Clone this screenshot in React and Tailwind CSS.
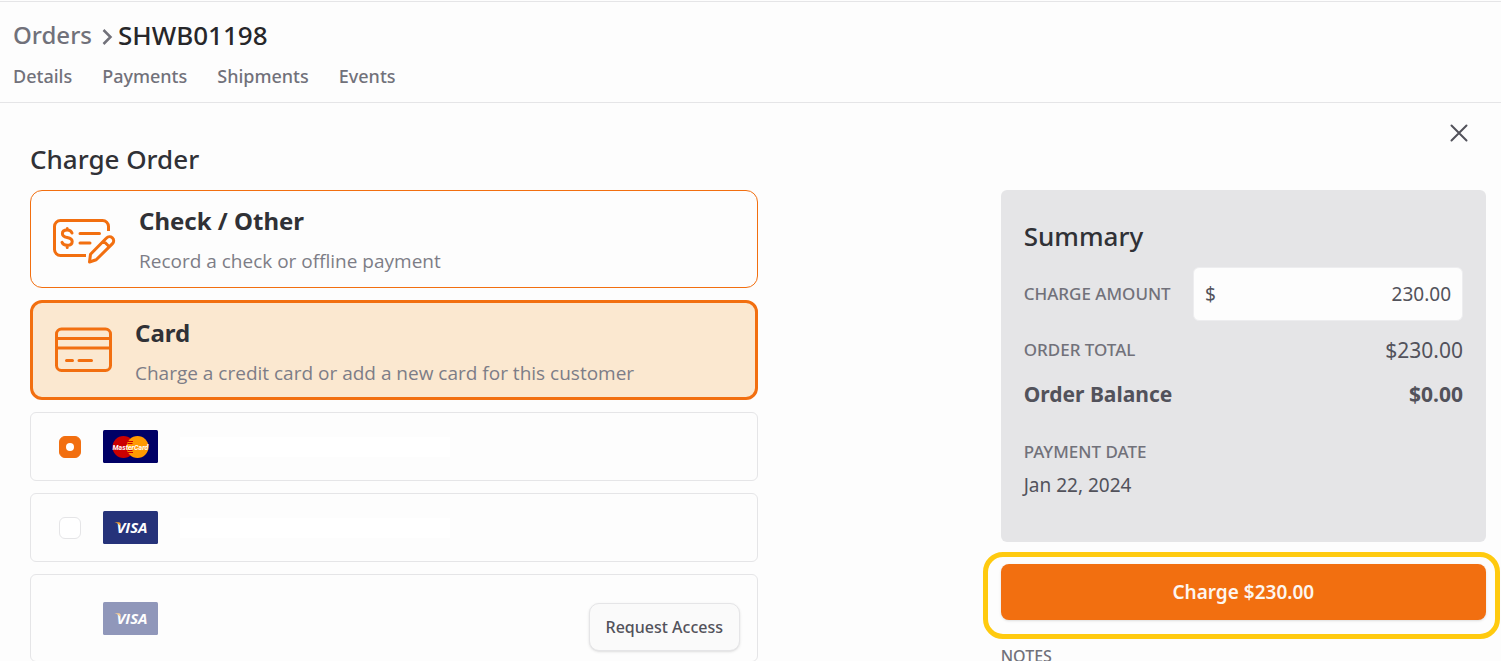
import React, { useState } from "react";

const tabs = ["Details", "Payments", "Shipments", "Events"];

const CheckIcon = () => (
  <svg
    width="63"
    height="46"
    viewBox="0 0 63 46"
    fill="none"
    stroke="#f26f10"
    strokeWidth="3"
    strokeLinecap="round"
    strokeLinejoin="round"
    className="shrink-0"
  >
    <path d="M55.5 13V8.500a6 6 0 0 0-6-6h-42a6 6 0 0 0-6 6v23a6 6 0 0 0 6 6H33" strokeLinecap="butt" />
    <path d="M19 15c-.7-1.800-2.400-2.900-4.800-2.900-2.800 0-4.800 1.400-4.800 3.600 0 2.400 2 3.200 4.800 3.800 2.900.6 5 1.400 5 4 0 2.300-2 3.800-5 3.800-2.700 0-4.600-1.200-5.200-3M14.200 10.500v1.500M14.200 27.500V29.500" />
    <path d="M27 15.500h19.500M27 25h10" />
    <path d="m36.500 44 1-7.800 16-16.200c1.600-1.700 4.200-1.700 5.900-.2 1.700 1.500 1.700 4.200.1 5.800L43.200 41.800 36.500 44ZM50.500 23l5.800 5.800" />
  </svg>
);

const CardIcon = () => (
  <svg
    width="57"
    height="52"
    viewBox="0 0 57 52"
    fill="none"
    stroke="#f26f10"
    strokeWidth="3"
    strokeLinecap="round"
    className="shrink-0"
  >
    <rect x="1.500" y="2" width="54" height="41.500" rx="5" />
    <path d="M2 11.500h53M2 21h53M11.500 33.500h6M24 33.500h12.500" />
  </svg>
);

const MasterCardLogo = () => (
  <svg width="55" height="33" viewBox="0 0 55 33" role="img" aria-label="MasterCard" className="shrink-0">
    <rect width="55" height="33" rx="1.500" fill="#000066" />
    <circle cx="20.500" cy="17" r="11" fill="#cc0000" />
    <circle cx="34.500" cy="17" r="11" fill="#ff9900" />
    <path d="M25 11.500h5M24.500 13.500h5M24.500 20.500h5M25 22.500h5" stroke="#cc0000" />
    <text
      x="27.500"
      y="19.500"
      textAnchor="middle"
      fill="#fff"
      fontFamily="Roboto, sans-serif"
      fontSize="7"
      fontWeight="700"
      fontStyle="italic"
    >
      MasterCard
    </text>
  </svg>
);

const VisaLogo = ({ faded }) => (
  <svg
    width="55"
    height="33"
    viewBox="0 0 55 33"
    role="img"
    aria-label="Visa"
    className={faded ? "shrink-0 opacity-50" : "shrink-0"}
  >
    <rect width="55" height="33" rx="1.500" fill="#26337a" />
    <text
      x="29"
      y="22"
      textAnchor="middle"
      fill="#fff"
      fontFamily="Open Sans, sans-serif"
      fontSize="15"
      fontWeight="700"
      fontStyle="italic"
    >
      VISA
    </text>
    <path d="M11.500 11.200h4.300c.8 0 1.200.4 1.400 1.100l.9 4c-1.200-2.500-3.400-4.200-6.600-5.100Z" fill="#f0a030" />
  </svg>
);

const PaymentType = ({ icon, title, text, selected, onClick }) => (
  <button
    type="button"
    aria-pressed={selected}
    onClick={onClick}
    className={
      selected
        ? "flex w-full items-center gap-[23px] rounded-xl border-3 border-[#f26f10] bg-[#fbe8d0] px-[22px] pt-3 pb-1.5 text-left"
        : "flex w-full items-center gap-[23px] rounded-xl border border-[#f26f10] px-[22px] pt-3 pb-2 text-left"
    }
  >
    {icon}
    <span className="flex flex-col gap-1">
      <span className="text-2xl leading-9 font-bold text-[#303136]">{title}</span>
      <span className="font-['Open_Sans',sans-serif] text-[19px] leading-9 text-[#7d7d87]">{text}</span>
    </span>
  </button>
);

const SavedCard = ({ id, label, logo, checked, onChange }) => (
  <label
    htmlFor={id}
    className="flex h-[69px] items-center gap-[22px] rounded-md border border-[#e5e5e7] px-7"
  >
    <input
      id={id}
      type="radio"
      name="savedCard"
      aria-label={label}
      checked={checked}
      onChange={onChange}
      className="grid size-[22px] shrink-0 appearance-none place-content-center rounded-md border border-[#e5e5e7] bg-white checked:border-[#f26f10] checked:bg-[#f26f10] checked:before:size-2 checked:before:rounded-full checked:before:bg-white checked:before:content-['']"
    />
    {logo}
    <span className="h-5 w-[270px] bg-white"></span>
  </label>
);

const App = () => {
  const [paymentType, setPaymentType] = useState("card");
  const [savedCard, setSavedCard] = useState("mastercard");
  const [amount, setAmount] = useState("230.00");

  return (
    <div className="h-screen overflow-hidden bg-[#fdfdfd] pt-px font-['Noto_Sans',sans-serif] text-[#52525b]">
      {/* Header */}
      <header className="border-y border-[#e5e5e7] px-[13px] pt-[15px] pb-3">
        <div className="flex items-center leading-9 font-medium">
          <a href="#orders" className="text-2xl leading-9 text-[#71717a]">
            Orders
          </a>
          <svg width="26" height="20" viewBox="0 0 26 20" fill="none" stroke="#71717a" strokeWidth="2.500">
            <path d="m11.500 5 7 7-7 7" />
          </svg>
          <h1 className="text-[26px] leading-9 text-[#27272a]">SHWB01198</h1>
        </div>
        <nav className="mt-[9px] flex gap-[30px] text-lg leading-7 font-medium text-[#71717a]">
          {tabs.map((tab) => (
            <a key={tab} href={`#${tab.toLowerCase()}`}>
              {tab}
            </a>
          ))}
        </nav>
      </header>

      <main className="pt-4 pr-[15px] pl-[30px]">
        <div className="mb-[15px] flex items-start justify-between">
          <h2 className="mt-6 text-[26px] leading-8 font-medium text-[#303136]">Charge Order</h2>
          <button type="button" aria-label="Close" className="mr-[13px]">
            <svg width="28" height="28" viewBox="0 0 28 28" fill="none" stroke="#52525b" strokeWidth="2" strokeLinecap="round">
              <path d="m6.500 6.500 15 15M21.500 6.500l-15 15" />
            </svg>
          </button>
        </div>

        <div className="flex items-start justify-between">
          {/* Payment methods */}
          <section className="flex w-1/2 flex-col gap-3">
            <PaymentType
              icon={<CheckIcon />}
              title="Check / Other"
              text="Record a check or offline payment"
              selected={paymentType === "check"}
              onClick={() => setPaymentType("check")}
            />
            <PaymentType
              icon={<CardIcon />}
              title="Card"
              text="Charge a credit card or add a new card for this customer"
              selected={paymentType === "card"}
              onClick={() => setPaymentType("card")}
            />
            <SavedCard
              id="mastercard"
              label="MasterCard"
              logo={<MasterCardLogo />}
              checked={savedCard === "mastercard"}
              onChange={() => setSavedCard("mastercard")}
            />
            <SavedCard
              id="visa"
              label="Visa"
              logo={<VisaLogo />}
              checked={savedCard === "visa"}
              onChange={() => setSavedCard("visa")}
            />
            <div className="flex h-[88px] items-center justify-between rounded-md border border-[#e5e5e7] pr-[17px] pl-[72px]">
              <VisaLogo faded />
              <button
                type="button"
                className="mb-2.5 h-12 self-end rounded-[10px] border border-[#e5e5e7] bg-[#fafafa] px-4 text-base font-medium shadow-sm"
              >
                Request Access
              </button>
            </div>
          </section>

          {/* Summary */}
          <aside className="w-1/3">
            <div className="rounded-md bg-[#e5e5e7] px-[23px] pt-7 pb-[43px]">
              <h2 className="text-[26px] leading-9 font-medium text-[#303136]">Summary</h2>
              <div className="mt-[13px] flex items-center justify-between gap-5">
                <label htmlFor="amount" className="text-[17px] font-medium whitespace-nowrap text-[#71717a]">
                  CHARGE AMOUNT
                </label>
                <div className="flex h-[54px] w-[270px] items-center rounded-md border border-[#ededef] bg-[#fdfdfd] px-[11px] text-[19px]">
                  <span>$</span>
                  <input
                    id="amount"
                    type="text"
                    value={amount}
                    onChange={(e) => setAmount(e.target.value)}
                    className="w-full min-w-0 bg-transparent text-right outline-none"
                  />
                </div>
              </div>
              <div className="mt-[13px] flex items-center justify-between">
                <span className="text-[17px] leading-8 font-medium text-[#71717a]">ORDER TOTAL</span>
                <span className="text-[21px] leading-8">$230.00</span>
              </div>
              <div className="mt-3 flex items-center justify-between text-[21px] leading-8 font-bold">
                <span>Order Balance</span>
                <span>$0.00</span>
              </div>
              <div className="mt-7 text-[17px] leading-7 font-medium text-[#71717a]">PAYMENT DATE</div>
              <div className="mt-[5px] text-[19px] leading-7">Jan 22, 2024</div>
            </div>

            <div className="relative mt-[22px]">
              <button
                type="button"
                className="h-14 w-full rounded-lg bg-[#f26f10] text-[19px] font-semibold text-[#fdf6f0] shadow-sm"
              >
                Charge ${amount}
              </button>
              <div className="pointer-events-none absolute -top-3 -right-3.5 -bottom-[19px] -left-[18px] rounded-[20px] border-5 border-[#ffca0f]"></div>
            </div>
            <label htmlFor="notes" className="mt-6 block text-base leading-6 font-medium text-[#71717a]">
              NOTES
            </label>
            <textarea id="notes" rows="3" className="mt-2 w-full rounded-md border border-[#e5e5e7]"></textarea>
          </aside>
        </div>
      </main>
    </div>
  );
};

export default App;
